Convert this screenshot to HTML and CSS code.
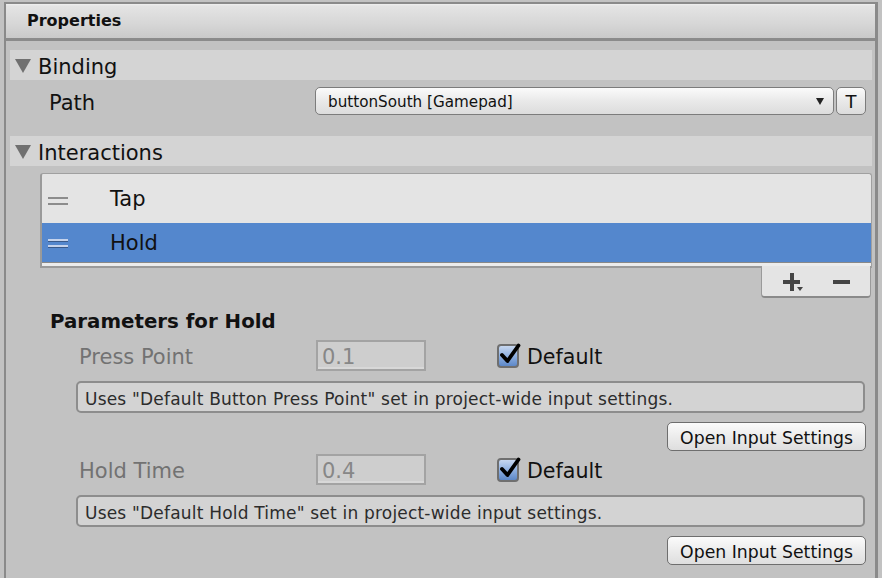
FILE: index.html
```html
<!DOCTYPE html>
<html>
<head>
<meta charset="utf-8">
<link rel="stylesheet" href="styles.css">
</head>
<body>
<div class="window">
  <div class="titlebar">Properties</div>
  <div class="content">
    <div class="foldout"><span class="tri"></span><span class="ftext">Binding</span></div>
    <div class="path-row">
      <span class="label">Path</span>
      <div class="dropdown"><span>buttonSouth [Gamepad]</span><span class="arrow"></span></div>
      <div class="tbtn">T</div>
    </div>
    <div class="foldout"><span class="tri"></span><span class="ftext">Interactions</span></div>
    <div class="list">
      <div class="rows">
        <div class="row row-tap"><span class="handle"></span><span class="row-text">Tap</span></div>
        <div class="row row-hold selected"><span class="handle"></span><span class="row-text">Hold</span></div>
      </div>
      <div class="list-bottom"></div>
    </div>
    <div class="footer-wrap">
      <div class="footer">
        <span class="plus"><span class="ph"></span><span class="pv"></span><span class="pdrop"></span></span>
        <span class="minus"></span>
      </div>
    </div>
    <div class="params">
      <div class="params-title">Parameters for Hold</div>
      <div class="param-row">
        <span class="plabel">Press Point</span>
        <div class="numfield">0.1</div>
        <span class="check"><svg width="22" height="22" viewBox="0 0 22 22"><path d="M3 12 L8.5 18 L19.5 2.5" fill="none" stroke="#000" stroke-width="3.8" stroke-linecap="round" stroke-linejoin="round"/></svg></span>
        <span class="check-label">Default</span>
      </div>
      <div class="help">Uses "Default Button Press Point" set in project-wide input settings.</div>
      <div class="btn-row"><div class="btn">Open Input Settings</div></div>
      <div class="param-row second">
        <span class="plabel">Hold Time</span>
        <div class="numfield">0.4</div>
        <span class="check"><svg width="22" height="22" viewBox="0 0 22 22"><path d="M3 12 L8.5 18 L19.5 2.5" fill="none" stroke="#000" stroke-width="3.8" stroke-linecap="round" stroke-linejoin="round"/></svg></span>
        <span class="check-label">Default</span>
      </div>
      <div class="help">Uses "Default Hold Time" set in project-wide input settings.</div>
      <div class="btn-row"><div class="btn">Open Input Settings</div></div>
    </div>
  </div>
</div>
</body>
</html>
```

FILE: styles.css
```css
* { box-sizing: border-box; }
html, body {
  margin: 0;
  padding: 0;
  background: #c2c2c2;
  font-family: "DejaVu Sans", "Liberation Sans", sans-serif;
  color: #111;
  overflow: hidden;
}
.window {
  margin: 2px 4px 0 4px;
  height: 576px;
  border: 2px solid #8a8a8a;
  border-bottom: none;
  border-right-width: 3px;
  background: #c2c2c2;
}
.titlebar {
  height: 37px;
  border-bottom: 3px solid #8b8b8b;
  background: linear-gradient(#f0f0f0 0, #e4e4e4 2px, #d6d6d6 60%, #c9c9c9 100%);
  font-weight: bold;
  font-size: 16px;
  padding-left: 21px;
  display: flex;
  align-items: center;
  padding-bottom: 1px;
}
.content {
  padding: 9px 3px 0 4px;
}
.foldout {
  height: 30px;
  background: #d4d4d4;
  display: flex;
  align-items: center;
  font-size: 21px;
  padding-left: 5px;
}
.ftext { padding-top: 3px; }
.tri {
  width: 0;
  height: 0;
  border-left: 8px solid transparent;
  border-right: 8px solid transparent;
  border-top: 14px solid #707070;
  margin-right: 7px;
  margin-top: 1px;
}
.path-row {
  height: 56px;
  padding-top: 7px;
  display: flex;
  align-items: flex-start;
}
.label {
  width: 305px;
  padding-left: 39px;
  padding-top: 2px;
  font-size: 21px;
  line-height: 28px;
}
.dropdown {
  width: 519px;
  height: 28px;
  border: 1.5px solid #7c7c7c;
  border-radius: 5px;
  background: linear-gradient(#fbfbfb, #e9e9e9 50%, #dcdcdc);
  display: flex;
  align-items: center;
  justify-content: space-between;
  padding: 1px 9px 0 12px;
  font-size: 15.2px;
  color: #111;
}
.arrow {
  width: 0;
  height: 0;
  border-left: 4px solid transparent;
  border-right: 4px solid transparent;
  border-top: 7px solid #222;
}
.tbtn {
  width: 30px;
  height: 28px;
  margin-left: 2px;
  border: 1.5px solid #7c7c7c;
  border-radius: 5px;
  background: linear-gradient(#fbfbfb, #e9e9e9 50%, #dcdcdc);
  display: flex;
  align-items: center;
  justify-content: center;
  font-size: 18px;
  padding-top: 1px;
}
.list {
  margin: 7px 0 0 30px;
  border: 1px solid #a0a0a0;
  border-left: 2px solid #9a9a9a;
  border-bottom: none;
  border-radius: 3px 3px 0 0;
  background: #e4e4e4;
}
.rows {
  border-bottom: 1px solid #888;
}
.row {
  display: flex;
  align-items: center;
  font-size: 21px;
}
.row-tap { height: 49px; }
.row-hold { height: 39px; }
.selected { background: #5487cd; }
.handle {
  width: 20px;
  height: 8px;
  margin-left: 6px;
  border-top: 2px solid #8c8c8c;
  border-bottom: 2px solid #8c8c8c;
  margin-top: 4px;
}
.selected .handle {
  border-top: 2px solid #c5d3ec;
  border-bottom: 2px solid #c5d3ec;
  box-shadow: 0 1px 0 #3a5a8a, inset 0 1px 0 #3a5a8a;
  margin-top: 0;
}
.row-text { margin-left: 42px; }
.list-bottom {
  height: 5px;
  background: #ececec;
  border-bottom: 2px solid #9a9a9a;
}
.footer-wrap {
  display: flex;
  justify-content: flex-end;
  padding-right: 1px;
}
.footer {
  width: 110px;
  height: 32px;
  margin-top: -2px;
  background: #e4e4e4;
  border-left: 1px solid #9a9a9a;
  border-bottom: 2px solid #8a8a8a;
  border-right: 1px solid #9a9a9a;
  border-radius: 0 0 4px 4px;
  display: flex;
  align-items: center;
  padding-left: 21px;
  padding-top: 2px;
}
.plus {
  position: relative;
  width: 18px;
  height: 18px;
  display: inline-block;
}
.ph {
  position: absolute;
  left: 0; top: 7px;
  width: 17px; height: 4px;
  background: #444;
}
.pv {
  position: absolute;
  left: 7px; top: 0;
  width: 4px; height: 18px;
  background: #444;
}
.pdrop {
  position: absolute;
  left: 14px; top: 14px;
  width: 0; height: 0;
  border-left: 3px solid transparent;
  border-right: 3px solid transparent;
  border-top: 4px solid #444;
}
.minus {
  width: 17px;
  height: 4px;
  background: #444;
  margin-left: 32px;
}
.params {
  padding-top: 12px;
}
.params-title {
  padding-left: 40px;
  font-weight: bold;
  font-size: 19.8px;
  line-height: 24px;
}
.param-row {
  margin-top: 6px;
  height: 31px;
  display: flex;
  align-items: center;
  padding-left: 69px;
}
.param-row.second { margin-top: 3px; }
.plabel {
  width: 237px;
  font-size: 21px;
  color: #727272;
  padding-top: 3px;
}
.numfield {
  width: 110px;
  height: 31px;
  border: 2px solid #a3a3a3;
  background: #cecece;
  box-shadow: inset 0 -2px 0 #d8d8d8;
  color: #878787;
  font-size: 21px;
  padding-left: 4px;
  padding-top: 2px;
  display: flex;
  align-items: center;
}
.check {
  width: 22px;
  height: 24px;
  margin-left: 71px;
  border: 2px solid #6f6f6f;
  border-radius: 4px;
  background: linear-gradient(#c7d7ef, #8fb0e0 50%, #5d88c8);
  display: flex;
  align-items: center;
  justify-content: center;
  overflow: visible;
}
.check svg { flex: none; margin-left: 3px; margin-top: -4px; }
.check-label {
  margin-left: 8px;
  font-size: 20.6px;
  color: #111;
  padding-top: 3px;
}
.help {
  margin: 10px 7px 0 66px;
  height: 32px;
  border: 2px solid #8d8d8d;
  border-radius: 5px;
  background: #d3d3d3;
  font-size: 17px;
  letter-spacing: 0.2px;
  color: #2c2c2c;
  padding-left: 7px;
  padding-top: 3px;
  display: flex;
  align-items: center;
}
.btn-row {
  display: flex;
  justify-content: flex-end;
  margin-top: 9px;
  padding-right: 6px;
}
.btn {
  width: 199px;
  height: 29px;
  border: 1.5px solid #6e6e6e;
  border-radius: 5px;
  background: linear-gradient(#fbfbfb, #ececec 50%, #dedede);
  display: flex;
  align-items: center;
  justify-content: center;
  font-size: 17.3px;
  color: #111;
  padding-top: 2px;
}
```
